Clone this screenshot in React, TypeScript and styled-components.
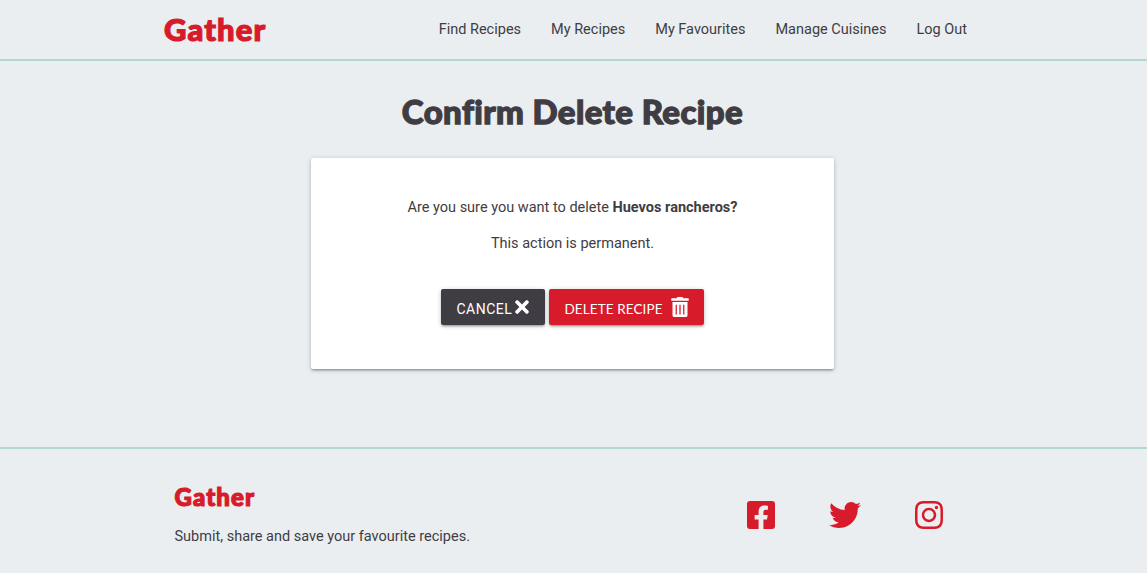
import React from 'react';
import styled, { createGlobalStyle } from 'styled-components';
import { FaFacebookSquare, FaTwitter, FaInstagram, FaTimes, FaTrashAlt } from 'react-icons/fa';

const Global = createGlobalStyle`
  *, *::before, *::after { box-sizing: border-box; }
  body {
    margin: 0;
    background: #eaeef1;
    color: #3f3d43;
    font: 400 14.5px/22.5px Roboto, sans-serif;
    overflow: hidden;
  }
  a { color: inherit; text-decoration: none; }
  h1, p { margin: 0; }
`;

const Page = styled.div`
  display: flex;
  flex-direction: column;
  height: 573px;
`;

const Header = styled.header`
  height: 61px;
  border-bottom: 2px solid #b2d8d0;
`;

const HeaderInner = styled.div`
  display: flex;
  justify-content: space-between;
  width: 818px;
  height: 59px;
  margin-left: 164px;
`;

const Brand = styled.a<{ $size: number; $line: number; $spacing: number }>`
  color: #d81b2b;
  font-family: 'Fredoka One', Lato, sans-serif;
  font-weight: 900;
  font-size: ${p => p.$size}px;
  line-height: ${p => p.$line}px;
  letter-spacing: ${p => p.$spacing}px;
  -webkit-text-stroke: 1.2px currentColor;
`;

const Nav = styled.nav`
  display: flex;
`;

const NavLink = styled.a`
  padding: 0 15px;
  line-height: 60px;
  white-space: nowrap;
`;

const Main = styled.main`
  display: flex;
  flex-direction: column;
  align-items: center;
  height: 386px;
  padding: 30px 2px 0 0;
`;

const Title = styled.h1`
  font-family: 'Fredoka One', Lato, sans-serif;
  font-weight: 900;
  font-size: 33px;
  line-height: 40px;
  letter-spacing: 0.4px;
  -webkit-text-stroke: 1.3px currentColor;
`;

const Card = styled.section`
  width: 523px;
  height: 211px;
  margin-top: 27px;
  padding-top: 39px;
  background: #fff;
  border-radius: 2px;
  text-align: center;
  box-shadow: 0 2px 2px 0 rgba(0, 0, 0, 0.14), 0 3px 1px -2px rgba(0, 0, 0, 0.12),
    0 1px 5px 0 rgba(0, 0, 0, 0.2);
`;

const Message = styled.p`
  margin-bottom: 13.5px;
  b { font-weight: 700; }
`;

const Actions = styled.div`
  display: flex;
  justify-content: center;
  gap: 4px;
  margin-top: 33px;
`;

const Button = styled.button<{ $width: number; $bg: string; $gap: number; $font: string; $spacing: number }>`
  display: flex;
  align-items: center;
  width: ${p => p.$width}px;
  height: 36px;
  padding: 5px 0 0 15.5px;
  border: 0;
  border-radius: 2px;
  background: ${p => p.$bg};
  color: #fff;
  font: ${p => p.$font};
  letter-spacing: ${p => p.$spacing}px;
  white-space: nowrap;
  box-shadow: 0 2px 2px 0 rgba(0, 0, 0, 0.14), 0 3px 1px -2px rgba(0, 0, 0, 0.12),
    0 1px 5px 0 rgba(0, 0, 0, 0.2);
  svg { flex: none; margin: -5px 0 0 ${p => p.$gap}px; }
`;

const Footer = styled.footer`
  display: flex;
  justify-content: space-between;
  height: 126px;
  padding: 32px 202px 0 174.5px;
  border-top: 2px solid #b2d8d0;
`;

const About = styled.div`
  display: flex;
  flex-direction: column;
  gap: 14px;
`;

const Social = styled.div`
  display: flex;
  gap: 52px;
  padding-top: 18px;
  color: #d81b2b;
`;

const links = ['Find Recipes', 'My Recipes', 'My Favourites', 'Manage Cuisines', 'Log Out'];

export default function App() {
  return (
    <Page>
      <Global />
      <Header>
        <HeaderInner>
          <Brand href="#" $size={31} $line={58} $spacing={1.1}>Gather</Brand>
          <Nav>
            {links.map(label => <NavLink href="#" key={label}>{label}</NavLink>)}
          </Nav>
        </HeaderInner>
      </Header>
      <Main>
        <Title>Confirm Delete Recipe</Title>
        <Card>
          <Message>Are you sure you want to delete <b>Huevos rancheros?</b></Message>
          <Message>This action is permanent.</Message>
          <Actions>
            <Button $width={104} $bg="#3f3d43" $gap={0} $spacing={0.5} $font="400 14px/31px Roboto, sans-serif">
              CANCEL<FaTimes size={20} />
            </Button>
            <Button $width={155} $bg="#d81b2b" $gap={7} $spacing={0.1} $font="400 13.5px/31px Lato, sans-serif">
              DELETE RECIPE<FaTrashAlt size={20} />
            </Button>
          </Actions>
        </Card>
      </Main>
      <Footer>
        <About>
          <Brand href="#" $size={24} $line={31} $spacing={1.1}>Gather</Brand>
          <p>Submit, share and save your favourite recipes.</p>
        </About>
        <Social>
          <FaFacebookSquare size={32} />
          <FaTwitter size={32} />
          <FaInstagram size={32} />
        </Social>
      </Footer>
    </Page>
  );
}
